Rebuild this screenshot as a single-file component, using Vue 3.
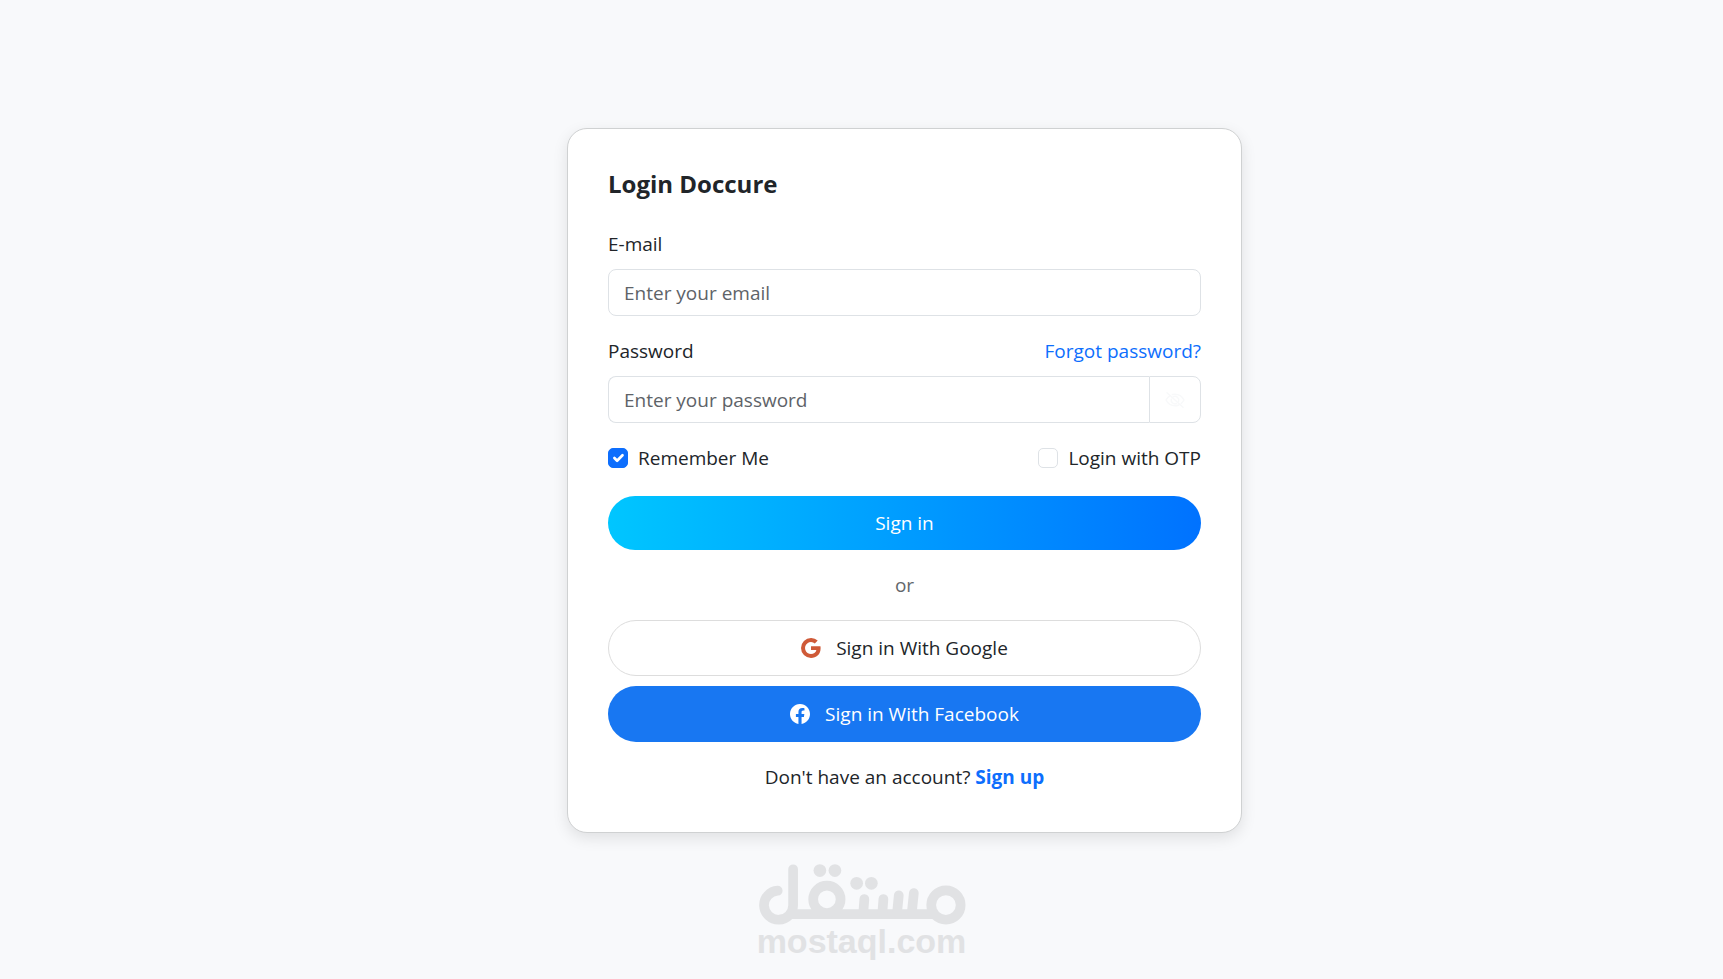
<script setup>
import { ref } from 'vue'

const email = ref('')
const password = ref('')
const showPassword = ref(false)
const remember = ref(true)
const otp = ref(false)
</script>

<template>
  <div class="page">
    <main class="login">
      <form class="card" @submit.prevent>
        <h1 class="title">Login Doccure</h1>

        <div class="field">
          <label for="email">E-mail</label>
          <input id="email" v-model="email" class="control" type="email" placeholder="Enter your email" />
        </div>

        <div class="field">
          <div class="row">
            <label for="password">Password</label>
            <a class="link" href="#">Forgot password?</a>
          </div>
          <div class="group">
            <input
              id="password"
              v-model="password"
              class="control"
              :type="showPassword ? 'text' : 'password'"
              placeholder="Enter your password"
            />
            <button class="toggle" type="button" aria-label="Show password" @click="showPassword = !showPassword">
              <svg viewBox="0 0 20 16" width="20" height="16" fill="none" stroke="currentColor" stroke-width="1.5" stroke-linecap="round">
                <path d="M5.2 3.6C3.2 4.8 1.8 6.6 1 8c1.600 3 4.800 5.800 9 5.800 1.400 0 2.700-.3 3.800-.8M7.400 2.500C8.200 2.300 9.100 2.200 10 2.200c4.200 0 7.400 2.800 9 5.800-.6 1.100-1.500 2.400-2.800 3.500" />
                <path d="M6.300 7.200a3.800 3.800 0 0 0 5.300 4.300M8.300 4.700a3.800 3.800 0 0 1 5.300 4.500" />
                <path d="M2 .8 18 15.200" />
              </svg>
            </button>
          </div>
        </div>

        <div class="row options">
          <label class="check"><input v-model="remember" type="checkbox" />Remember Me</label>
          <label class="check"><input v-model="otp" type="checkbox" />Login with OTP</label>
        </div>

        <button class="btn primary" type="submit">Sign in</button>
        <p class="divider">or</p>
        <button class="btn google" type="button">
          <svg viewBox="0 0 16 16" width="20" height="20" fill="#cf5a38">
            <path d="M15.545 6.558a9.420 9.420 0 0 1 .139 1.626c0 2.434-.87 4.492-2.384 5.885h.002C11.978 15.292 10.158 16 8 16A8 8 0 1 1 8 0a7.689 7.689 0 0 1 5.352 2.082l-2.284 2.284A4.347 4.347 0 0 0 8 3.166c-2.087 0-3.860 1.408-4.492 3.304a4.792 4.792 0 0 0 0 3.063h.003c.635 1.893 2.405 3.301 4.492 3.301 1.078 0 2.004-.276 2.722-.764h-.003a3.702 3.702 0 0 0 1.599-2.431H8v-3.080h7.545z" />
          </svg>
          Sign in With Google
        </button>
        <button class="btn facebook" type="button">
          <svg viewBox="0 0 16 16" width="20" height="20" fill="currentColor">
            <path d="M16 8.049c0-4.446-3.582-8.050-8-8.050C3.580 0-.002 3.603-.002 8.050c0 4.017 2.926 7.347 6.750 7.951v-5.625h-2.030V8.050H6.750V6.275c0-2.017 1.195-3.131 3.022-3.131.876 0 1.791.157 1.791.157v1.980h-1.009c-.993 0-1.303.621-1.303 1.258v1.510h2.218l-.354 2.326H9.250V16c3.824-.604 6.750-3.934 6.750-7.951z" />
          </svg>
          Sign in With Facebook
        </button>

        <p class="signup">Don't have an account? <a class="link strong" href="#">Sign up</a></p>
      </form>
    </main>

    <footer class="brand">
      <svg viewBox="54 42 622 181" width="208" height="61" role="img" aria-label="مستقل" fill="none" stroke="currentColor" stroke-width="29" stroke-linecap="round">
        <path d="M113 121a43.500 43.500 0 1 0 46 43V57" />
        <path d="M146 191H590" stroke-linecap="butt" />
        <circle cx="260" cy="147" r="41" />
        <circle cx="616" cy="164" r="44" />
        <path d="M372 146 369 186M429 146 426 186M475 135 470 186M520 128 514 186" />
        <g fill="currentColor" stroke="none">
          <circle cx="239" cy="61" r="19" />
          <circle cx="284" cy="61" r="19" />
          <circle cx="349" cy="99" r="19" />
          <circle cx="393" cy="99" r="19" />
        </g>
      </svg>
      <span>mostaql.com</span>
    </footer>
  </div>
</template>

<style>
body {
  margin: 0;
  background: #f8f9fb;
}
</style>

<style scoped>
* {
  box-sizing: border-box;
}

.page {
  display: flex;
  flex-direction: column;
  align-items: center;
  min-height: 100vh;
  padding-top: 128px;
  background: #f8f9fb;
  color: #212529;
  font-family: "Segoe UI", "Open Sans", "Noto Sans", sans-serif;
  font-size: 19px;
  line-height: 30px;
}

.login {
  display: flex;
  justify-content: center;
  width: 100%;
  padding-left: 86px;
}

.card {
  display: flex;
  flex-direction: column;
  width: 100%;
  max-width: 675px;
  padding: 40px;
  background: #fff;
  border: 1px solid #cfd1d2;
  border-radius: 20px;
  box-shadow: 0 5px 15px rgba(0, 0, 0, 0.1);
}

.title {
  margin: 0 0 30px;
  font-size: 24px;
  font-weight: 700;
  line-height: 30px;
}

.field {
  display: flex;
  flex-direction: column;
  gap: 10px;
  margin-bottom: 20px;
}

.row {
  display: flex;
  align-items: center;
  justify-content: space-between;
}

.control {
  flex: 1;
  min-width: 0;
  height: 47px;
  min-height: 47px;
  padding: 0 15px;
  color: inherit;
  font: inherit;
  background: #fff;
  border: 1px solid #dee2e6;
  border-radius: 8px;
}

.control::placeholder {
  color: #5e6368;
  opacity: 1;
}

.group {
  display: flex;
}

.group .control {
  border-right: 0;
  border-radius: 8px 0 0 8px;
}

.toggle {
  display: flex;
  align-items: center;
  justify-content: center;
  width: 52px;
  padding: 0;
  color: #f8f9fa;
  background: #fff;
  border: 1px solid #dee2e6;
  border-radius: 0 8px 8px 0;
}

.options {
  margin-bottom: 23px;
}

.check {
  display: flex;
  align-items: center;
  gap: 10px;
}

.check input {
  width: 20px;
  height: 20px;
  margin: 0;
  appearance: none;
  background: #fff center / contain no-repeat;
  border: 1px solid #dee2e6;
  border-radius: 5px;
}

.check input:checked {
  background-color: #0d6efd;
  background-image: url("data:image/svg+xml,%3Csvg xmlns='http://www.w3.org/2000/svg' viewBox='0 0 20 20'%3E%3Cpath fill='none' stroke='%23fff' stroke-linecap='round' stroke-linejoin='round' stroke-width='3' d='m6 10 3 3 6-6'/%3E%3C/svg%3E");
  border-color: #0d6efd;
}

.btn {
  display: flex;
  align-items: center;
  justify-content: center;
  gap: 15px;
  height: 56px;
  padding: 0 20px;
  font: inherit;
  border: 0;
  border-radius: 28px;
}

.primary {
  height: 54px;
  color: #fff;
  background: linear-gradient(to right, #00c6ff, #0072ff);
}

.google {
  margin-bottom: 10px;
  color: #212529;
  background: #fff;
  border: 1px solid #ddd;
}

.facebook {
  color: #fff;
  background: #1877f2;
}

.divider {
  margin: 20px 0;
  color: #62676c;
  text-align: center;
}

.signup {
  margin: 20px 0 0;
  text-align: center;
}

.link {
  color: #0d6efd;
  text-decoration: none;
}

.strong {
  font-weight: 700;
}

.brand {
  display: flex;
  flex-direction: column;
  align-items: center;
  margin-top: 31px;
  color: #e1e2e4;
  font-family: "Liberation Sans", Arial, sans-serif;
  font-size: 34px;
  font-weight: 700;
  line-height: 32px;
}
</style>
